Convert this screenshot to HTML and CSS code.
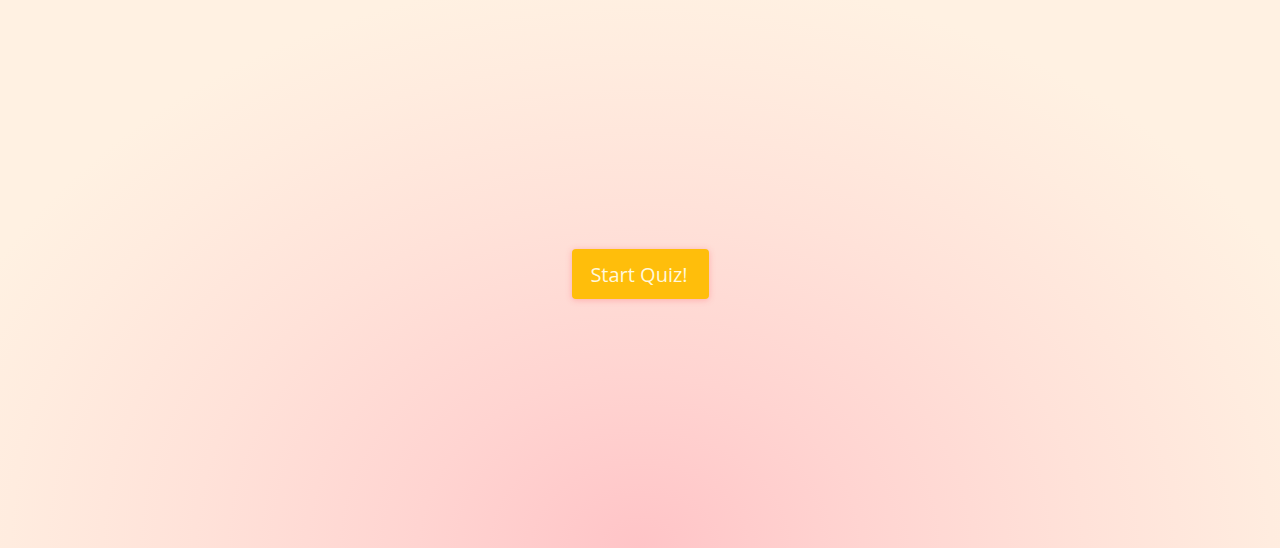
FILE: index.html
```html
<!DOCTYPE html>
<html lang="en">
<head>
<meta charset="utf-8">
<title>Quiz</title>
<link rel="stylesheet" href="styles.css">
</head>
<body>
<main class="stage">
  <button class="start-btn" type="button">Start Quiz!</button>
</main>
</body>
</html>
```
FILE: styles.css
```css
html, body {
  margin: 0;
  padding: 0;
  height: 100%;
}
body {
  font-family: "Open Sans", "Noto Sans", sans-serif;
  background: radial-gradient(ellipse 58% 105% at 50% 100%, #ffc4c7 0%, #ffd4d1 30%, #ffe2d9 60%, #ffecdf 85%, #fff1e2 100%);
  background-color: #fff2e3;
}
.stage {
  height: 100%;
  display: flex;
  align-items: center;
  justify-content: center;
}
.start-btn {
  font-family: inherit;
  font-size: 20px;
  color: #fff8dc;
  background: #ffbe0b;
  border: none;
  border-radius: 4px;
  width: 137px;
  height: 50px;
  padding: 0 2px 0 0;
  box-shadow: 0 1px 6px rgba(255, 110, 120, 0.45);
  cursor: pointer;
}
```
